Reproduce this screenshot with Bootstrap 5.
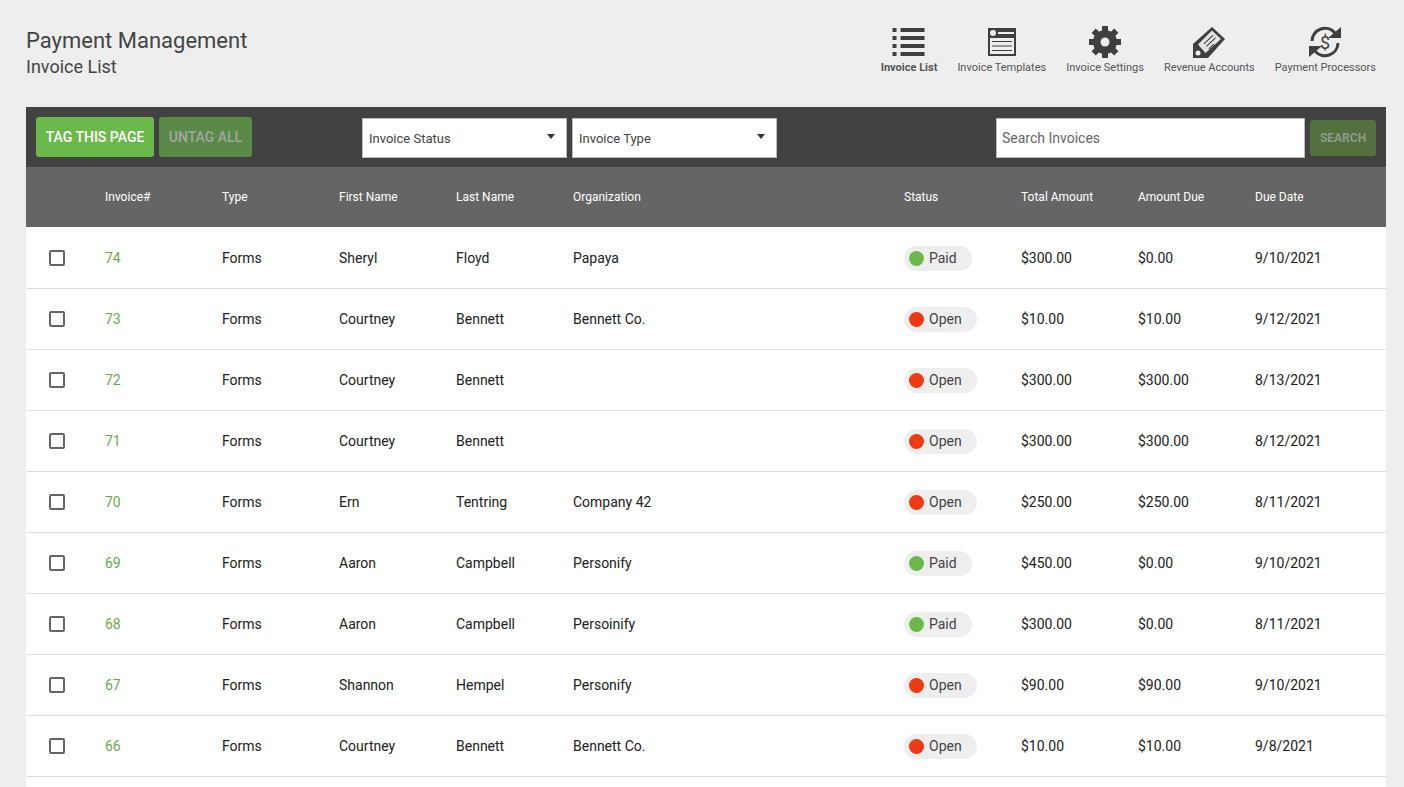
<!DOCTYPE html>
<html lang="en">
<head>
<meta charset="utf-8">
<title>Invoice List</title>
<link href="https://cdn.jsdelivr.net/npm/bootstrap@5.3.0/dist/css/bootstrap.min.css" rel="stylesheet">
<style>
html,body{height:787px;overflow:hidden}
body{background:#eee;font-family:Roboto,"Liberation Sans",sans-serif;color:#212121;}
.shell{padding:0 18px 0 26px}
.topbar{height:107px;padding-top:27px;align-items:flex-start}
.ttl{font-size:22px;line-height:28px;color:#444;font-weight:400;margin:0}
.sub{font-size:18px;line-height:24px;color:#444;font-weight:400;margin:0}
.tools{gap:20px;padding-right:10px;margin-top:-1px}
.tool{font-size:11px;line-height:14px;color:#555;text-decoration:none;display:flex;flex-direction:column;align-items:center}
.tool svg{display:block;width:34px;height:34px;fill:#3f3f3f}
.tool span{margin-top:1px}
.tool.on{font-weight:700}
.toolbar{background:#424242;height:60px;padding:0 10px}
.bt{font-size:14px;font-weight:500;text-transform:uppercase;border:0;border-radius:3px;height:40px;width:118px;padding:0;color:#fff;background:#6cb94b}
.bt.dim{background:#5a8a48;color:#a5a5a5;margin-left:5px;width:93px}
.bt.sr{background:#54703f;color:#8f9a88;height:36px;font-size:12px;font-weight:700;margin-left:5px;width:66px}
.lefts{width:326px}
.lower{margin-top:2px}
.pick{height:40px;border:1px solid #bbb;background:#fff;font-size:13px;color:#444;padding:2px 6px 0;display:flex;align-items:center;justify-content:space-between;margin-right:5px}
.pick i{width:0;height:0;border-left:4.5px solid transparent;border-right:4.5px solid transparent;border-top:5px solid #333;margin:0 5px 5px 0}
.p1{width:205px}.p2{width:205px}
.srch{width:309px;height:40px;border:1px solid #bbb;border-radius:0;font-size:14px;padding:0 5px;color:#555}
.srch::placeholder{color:#666;opacity:1}
table.invt{table-layout:fixed;width:1360px;margin:0;background:#fff;font-size:14px;border-collapse:separate;border-spacing:0}
.invt th{background:#656565;color:#fff;font-size:12px;font-weight:400;height:60px;padding:0;vertical-align:middle;border:0}
.invt td{height:61px;padding:1px 0 0;vertical-align:middle;border-bottom:1px solid #ddd;color:#212121;background:#fff;line-height:21px}
.invt tbody tr:first-child td{height:62px;padding-top:2px}
.invt a{color:#6aa84f;text-decoration:none}
.box{display:block;width:16px;height:16px;border:2px solid #666;border-radius:2px;margin:0 0 1px 23px}
.stat{display:flex;width:max-content;align-items:center;height:25px;border-radius:13px;background:#eee;color:#444;padding:0 15px 0 5px;gap:5px}
.stat i{width:15px;height:15px;border-radius:50%;display:block}
.stat.paid i{background:#6cb94b}
.stat.open i{background:#ee3a12}
</style>
</head>
<body>
<div class="shell">
  <header class="topbar d-flex justify-content-between">
    <div>
      <h1 class="ttl">Payment Management</h1>
      <h2 class="sub">Invoice List</h2>
    </div>
    <nav class="tools d-flex">
      <a class="tool on" href="#"><svg viewBox="0 0 34 34"><path d="M.5 2h4v4h-4zM8.500 2h24v4h-24zM.5 10h4v4h-4zM8.500 10h24v4h-24zM.5 18h4v4h-4zM8.500 18h24v4h-24zM.5 26h4v4h-4zM8.500 26h24v4h-24z"/></svg><span>Invoice List</span></a>
      <a class="tool" href="#"><svg viewBox="0 0 34 34"><path fill-rule="evenodd" d="M3 2h28v28H3zM5 12v16h24V12zM13 6v2h16V6z"/><circle cx="8" cy="7" r="3" fill="#eee"/><path d="M7 15h20v1H7zM7 19.500h20v1H7zM7 24h20v1H7z"/></svg><span>Invoice Templates</span></a>
      <a class="tool" href="#"><svg viewBox="0 0 34 34"><g><circle cx="17" cy="16" r="12"/><rect x="14" y="0" width="6" height="32"/><rect x="14" y="0" width="6" height="32" transform="rotate(45 17 16)"/><rect x="14" y="0" width="6" height="32" transform="rotate(90 17 16)"/><rect x="14" y="0" width="6" height="32" transform="rotate(135 17 16)"/><circle cx="17" cy="16" r="4.500" fill="#eee"/></g></svg><span>Invoice Settings</span></a>
      <a class="tool" href="#"><svg viewBox="0 0 34 34"><path d="M20 1l13 12-17 19H1V18z"/><circle cx="6" cy="27" r="2.500" fill="#eee"/><path d="M20 4.500l9 8.500-15.500 14L6 18.500z" fill="#e4e4e4"/><path d="M11.500 17.500l9-8.500.8.800-9 8.500zM14 20l9-8.500.8.800-9 8.500zM16.500 22.500l5-4.700.8.800-5 4.700z"/></svg><span>Revenue Accounts</span></a>
      <a class="tool" href="#"><svg viewBox="0 0 34 34"><path d="M4 15A13 13 0 0 1 27 7M30 17a13 13 0 0 1-23 8" fill="none" stroke="#3f3f3f" stroke-width="3"/><path d="M33 1v11H20zM1 31V20h13z"/><text x="17" y="23" text-anchor="middle" font-size="18" font-family="Roboto" fill="#3f3f3f">$</text></svg><span>Payment Processors</span></a>
    </nav>
  </header>

  <div class="toolbar d-flex align-items-center">
    <div class="lefts d-flex">
      <button class="bt" type="button">Tag this page</button>
      <button class="bt dim" type="button">Untag all</button>
    </div>
    <div class="d-flex lower">
      <div class="pick p1">Invoice Status<i></i></div>
      <div class="pick p2">Invoice Type<i></i></div>
    </div>
    <div class="d-flex align-items-center ms-auto lower">
      <input class="srch" type="text" placeholder="Search Invoices">
      <button class="bt sr" type="button">Search</button>
    </div>
  </div>

  <table class="table invt">
    <colgroup><col style="width:79px"><col style="width:117px"><col style="width:117px"><col style="width:117px"><col style="width:117px"><col style="width:331px"><col style="width:117px"><col style="width:117px"><col style="width:117px"><col style="width:131px"></colgroup>
    <thead><tr><th></th><th>Invoice#</th><th>Type</th><th>First Name</th><th>Last Name</th><th>Organization</th><th>Status</th><th>Total Amount</th><th>Amount Due</th><th>Due Date</th></tr></thead>
    <tbody>
      <tr><td><span class="box"></span></td><td><a href="#">74</a></td><td>Forms</td><td>Sheryl</td><td>Floyd</td><td>Papaya</td><td><span class="stat paid"><i></i>Paid</span></td><td>$300.00</td><td>$0.00</td><td>9/10/2021</td></tr>
      <tr><td><span class="box"></span></td><td><a href="#">73</a></td><td>Forms</td><td>Courtney</td><td>Bennett</td><td>Bennett Co.</td><td><span class="stat open"><i></i>Open</span></td><td>$10.00</td><td>$10.00</td><td>9/12/2021</td></tr>
      <tr><td><span class="box"></span></td><td><a href="#">72</a></td><td>Forms</td><td>Courtney</td><td>Bennett</td><td></td><td><span class="stat open"><i></i>Open</span></td><td>$300.00</td><td>$300.00</td><td>8/13/2021</td></tr>
      <tr><td><span class="box"></span></td><td><a href="#">71</a></td><td>Forms</td><td>Courtney</td><td>Bennett</td><td></td><td><span class="stat open"><i></i>Open</span></td><td>$300.00</td><td>$300.00</td><td>8/12/2021</td></tr>
      <tr><td><span class="box"></span></td><td><a href="#">70</a></td><td>Forms</td><td>Ern</td><td>Tentring</td><td>Company 42</td><td><span class="stat open"><i></i>Open</span></td><td>$250.00</td><td>$250.00</td><td>8/11/2021</td></tr>
      <tr><td><span class="box"></span></td><td><a href="#">69</a></td><td>Forms</td><td>Aaron</td><td>Campbell</td><td>Personify</td><td><span class="stat paid"><i></i>Paid</span></td><td>$450.00</td><td>$0.00</td><td>9/10/2021</td></tr>
      <tr><td><span class="box"></span></td><td><a href="#">68</a></td><td>Forms</td><td>Aaron</td><td>Campbell</td><td>Persoinify</td><td><span class="stat paid"><i></i>Paid</span></td><td>$300.00</td><td>$0.00</td><td>8/11/2021</td></tr>
      <tr><td><span class="box"></span></td><td><a href="#">67</a></td><td>Forms</td><td>Shannon</td><td>Hempel</td><td>Personify</td><td><span class="stat open"><i></i>Open</span></td><td>$90.00</td><td>$90.00</td><td>9/10/2021</td></tr>
      <tr><td><span class="box"></span></td><td><a href="#">66</a></td><td>Forms</td><td>Courtney</td><td>Bennett</td><td>Bennett Co.</td><td><span class="stat open"><i></i>Open</span></td><td>$10.00</td><td>$10.00</td><td>9/8/2021</td></tr>
      <tr><td></td><td></td><td></td><td></td><td></td><td></td><td></td><td></td><td></td><td></td></tr>
    </tbody>
  </table>
</div>
<script src="https://cdn.jsdelivr.net/npm/bootstrap@5.3.0/dist/js/bootstrap.bundle.min.js"></script>
</body>
</html>
